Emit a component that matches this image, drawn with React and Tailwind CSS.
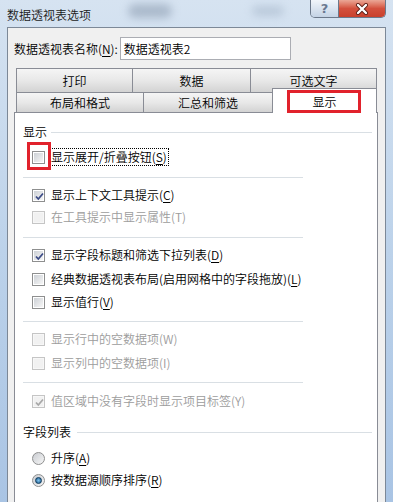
import React from 'react'

const K = ({ k }) => <span className="underline underline-offset-[2px]">{k}</span>

const Check = ({ checked, disabled, children }) => (
  <span
    className={`relative flex h-[13px] w-[13px] shrink-0 items-center justify-center border ${
      disabled ? 'border-[#c5c5c5] bg-[#f7f7f7]' : 'border-[#8e8f8f] bg-white'
    }`}
  >
    <span
      className={`h-[9px] w-[9px] ${
        disabled ? 'bg-[#f1f1f1]' : 'bg-linear-to-br from-[#cdd1d6] to-[#f6f6f6]'
      }`}
    />
    {checked && (
      <svg className="absolute left-[1px] top-[1px]" width="11" height="11" viewBox="0 0 11 11">
        <path
          d="M2 5.5 L4.3 8 L9 2.5"
          fill="none"
          stroke={disabled ? '#a8a8a8' : '#3d4c86'}
          strokeWidth="1.8"
        />
      </svg>
    )}
    {children}
  </span>
)

const Radio = ({ on }) => (
  <span className="flex h-[13px] w-[13px] shrink-0 items-center justify-center rounded-full border border-[#8e8f8f] bg-linear-to-br from-[#c9ccd1] to-[#f7f7f7]">
    {on && (
      <span className="h-[7px] w-[7px] rounded-full border border-[#0d3a5c] bg-radial from-[#7fc3ec] to-[#16578a]" />
    )}
  </span>
)

const Row = ({ mt, checked, disabled, focus, radio, on, children, mark }) => (
  <div className={`flex h-[20px] items-center pl-[17px] ${mt}`}>
    {radio ? (
      <Radio on={on} />
    ) : (
      <Check checked={checked} disabled={disabled}>
        {mark && (
          <span className="absolute left-[-6px] top-[-10px] h-[28px] w-[24px] border-[3px] border-[#e1222c]" />
        )}
      </Check>
    )}
    <span
      className={`ml-[4px] flex h-[18px] items-center whitespace-nowrap border px-[1px] leading-[18px] ${
        focus ? 'border-dotted border-black' : 'border-transparent'
      } ${disabled ? 'text-[#9c9c9c]' : 'text-black'}`}
    >
      {children}
    </span>
  </div>
)

const Sep = ({ mt }) => <div className={`ml-[8px] h-px w-[280px] bg-[#d9dfe4] ${mt}`} />

const tabBg = 'bg-linear-to-b from-[#f5f5f5] via-[#e8e8e8] to-[#d3d3d3]'

export default function App() {
  return (
    <div className="relative flex h-[502px] w-[393px] flex-col overflow-hidden bg-linear-to-b from-[#d6e3f1] via-[#bcd2ea] to-[#a9c4e4] font-['Noto_Sans_CJK_SC','Microsoft_YaHei',sans-serif] text-[12px] font-[350] text-black">
      {/* glass title bar */}
      <div className="relative flex h-[27px] shrink-0 items-start">
        <div className="absolute left-[128px] top-[4px] h-[14px] w-[44px] rounded-full bg-[#8f9fb3] opacity-60 blur-[4px]" />
        <div className="absolute left-[252px] top-[6px] h-[10px] w-[32px] rounded-full bg-[#9fb0c4] opacity-50 blur-[4px]" />
        <span className="relative ml-[7px] mt-[7px] leading-[16px] text-[#1b1b1b]">数据透视表选项</span>
        <div className="relative ml-auto mr-[7px] flex h-[18px] overflow-hidden rounded-b-[5px] border border-t-0 border-[#6b788a]">
          <div className="flex w-[28px] items-center justify-center border-r border-[#6b788a] bg-linear-to-b from-[#f1f5fa] to-[#c4d3e5]">
            <span className="font-['DejaVu_Sans',sans-serif] text-[13px] font-bold leading-none text-[#6a7890]">?</span>
          </div>
          <div className="flex w-[46px] items-center justify-center bg-linear-to-b from-[#eaa796] via-[#d3503d] to-[#c8402c]">
            <svg width="14" height="12" viewBox="0 0 14 12">
              <path d="M3 2 L11 10 M11 2 L3 10" stroke="#5a1c14" strokeWidth="4" strokeLinecap="round" />
              <path d="M3 2 L11 10 M11 2 L3 10" stroke="#ffffff" strokeWidth="2.4" strokeLinecap="round" />
            </svg>
          </div>
        </div>
      </div>

      {/* client area */}
      <div className="mx-[7px] flex flex-1 flex-col border border-b-0 border-[#7c8897] bg-[#f0f0f0]">
        <div className="mt-[9px] flex items-center pl-[6px]">
          <span className="leading-[18px]">
            数据透视表名称(<K k="N" />):
          </span>
          <div className="ml-[2px] flex h-[23px] w-[171px] items-center border border-[#abadb3] bg-white pl-[3px]">
            数据透视表2
          </div>
        </div>

        {/* tabs */}
        <div className="ml-[8px] mt-[8px] flex w-[361px] flex-col">
          <div className="flex h-[24px]">
            <div className={`flex w-[116px] items-center justify-center border-l border-t border-[#898c95] ${tabBg}`}>打印</div>
            <div className={`flex w-[118px] items-center justify-center border-l border-t border-[#898c95] ${tabBg}`}>数据</div>
            <div className={`flex w-[127px] items-center justify-center border-l border-r border-t border-[#898c95] ${tabBg}`}>可选文字</div>
          </div>
          <div className="flex h-[20px] items-end">
            <div className={`flex h-[20px] w-[127px] items-center justify-center border-l border-t border-[#898c95] ${tabBg}`}>布局和格式</div>
            <div className={`flex h-[20px] w-[129px] items-center justify-center border-l border-t border-[#898c95] ${tabBg}`}>汇总和筛选</div>
            <div className="relative z-10 mb-[-1px] flex h-[25px] w-[105px] items-center justify-center border-l border-r border-t border-[#898c95] bg-white">
              <span className="absolute left-[14px] top-[1px] h-[23px] w-[74px] border-[3px] border-[#e1222c]" />
              <span className="relative mt-[1px]">显示</span>
            </div>
          </div>
        </div>

        {/* panel */}
        <div className="ml-[6px] flex w-[364px] flex-1 flex-col border border-b-0 border-[#898c95] bg-white">
          <div className="mt-[9px] flex h-[20px] items-center pl-[8px]">
            <span className="leading-[18px]">显示</span>
            <div className="ml-[4px] mr-[5px] h-px flex-1 bg-[#d9dfe4]" />
          </div>
          <Row mt="mt-[5px]" focus mark>
            显示展开/折叠按钮(<K k="S" />)
          </Row>
          <Sep mt="mt-[10px]" />
          <Row mt="mt-[7px]" checked>
            显示上下文工具提示(<K k="C" />)
          </Row>
          <Row mt="mt-[2px]" disabled>
            在工具提示中显示属性(T)
          </Row>
          <Sep mt="mt-[10px]" />
          <Row mt="mt-[7px]" checked>
            显示字段标题和筛选下拉列表(<K k="D" />)
          </Row>
          <Row mt="mt-[4px]">
            经典数据透视表布局(启用网格中的字段拖放)(<K k="L" />)
          </Row>
          <Row mt="mt-[3px]">
            显示值行(<K k="V" />)
          </Row>
          <Sep mt="mt-[9px]" />
          <Row mt="mt-[7px]" disabled>
            显示行中的空数据项(W)
          </Row>
          <Row mt="mt-[4px]" disabled>
            显示列中的空数据项(I)
          </Row>
          <Sep mt="mt-[9px]" />
          <Row mt="mt-[8px]" disabled checked>
            值区域中没有字段时显示项目标签(Y)
          </Row>
          <div className="mt-[11px] flex h-[20px] items-center pl-[8px]">
            <span className="leading-[18px]">字段列表</span>
            <div className="ml-[6px] mr-[5px] h-px flex-1 bg-[#d9dfe4]" />
          </div>
          <Row mt="mt-[6px]" radio>
            升序(<K k="A" />)
          </Row>
          <Row mt="mt-[2px]" radio on>
            按数据源顺序排序(<K k="R" />)
          </Row>
        </div>
      </div>
    </div>
  )
}
